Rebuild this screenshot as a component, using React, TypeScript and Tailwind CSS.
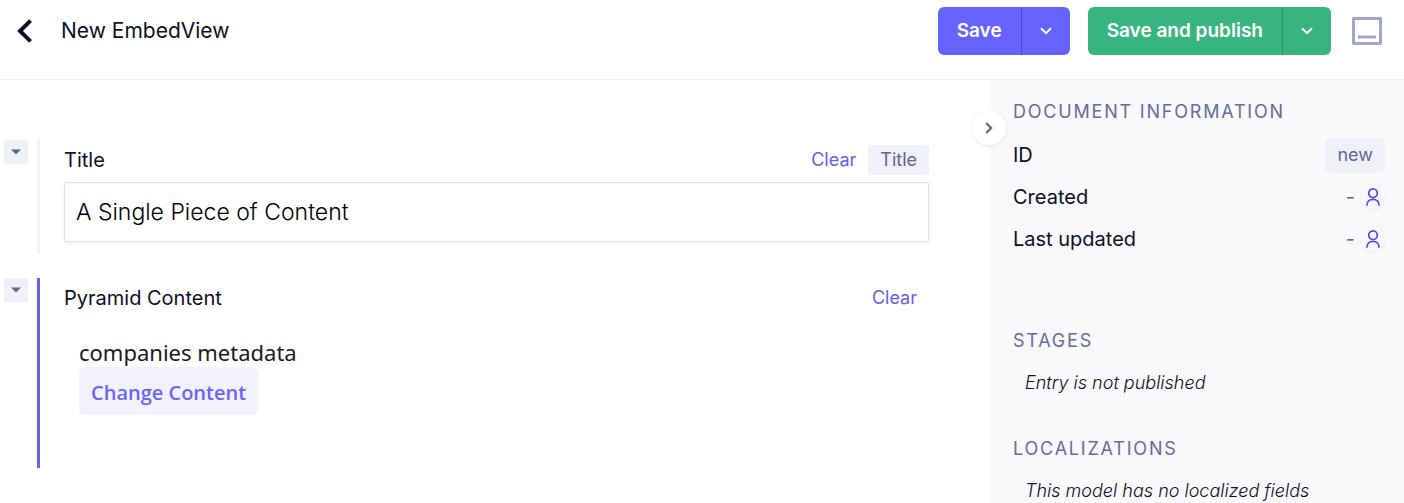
import { useState, type ReactNode } from "react";

function ChevronDown() {
  return (
    <svg width="12" height="8" viewBox="0 0 12 8" fill="none" stroke="currentColor" strokeWidth="2" aria-hidden="true">
      <path d="M1 1.2 6 6.2 11 1.2" />
    </svg>
  );
}

function SplitButton({ label, tone, divider }: { label: string; tone: string; divider: string }) {
  return (
    <div className={`flex h-12 overflow-hidden rounded-md text-white ${tone}`}>
      <button type="button" className="px-[19px] text-[19px] font-semibold">
        {label}
      </button>
      <button
        type="button"
        aria-label={`${label} options`}
        className={`flex w-[49px] items-center justify-center border-l ${divider}`}
      >
        <ChevronDown />
      </button>
    </div>
  );
}

function Header() {
  return (
    <header className="flex h-20 items-start justify-between border-b border-[#efeff3] pt-[7px] pr-[22px] pl-4">
      <div className="flex h-12 items-center gap-7">
        <button type="button" aria-label="Back" className="text-[#0d0f26]">
          <svg width="17" height="24" viewBox="0 0 17 24" fill="none" stroke="currentColor" strokeWidth="4" aria-hidden="true">
            <path d="M14.6 1.6 4 12l10.600 10.400" />
          </svg>
        </button>
        <h1 className="text-[21px] text-[#0d0f26]">New EmbedView</h1>
      </div>
      <div className="flex items-center gap-[18px]">
        <SplitButton label="Save" tone="bg-[#6663fd]" divider="border-[#4b46d8]" />
        <SplitButton label="Save and publish" tone="bg-[#38b47e]" divider="border-[#2a9566]" />
        <button type="button" aria-label="Toggle bottom panel" className="ml-[3px] text-[#a3a6cb]">
          <svg width="30" height="28" viewBox="0 0 30 28" fill="none" stroke="currentColor" strokeWidth="3" aria-hidden="true">
            <rect x="1.500" y="1.500" width="27" height="25" strokeLinejoin="round" />
            <path d="M6 20h18" />
          </svg>
        </button>
      </div>
    </header>
  );
}

function Field({ name, bar, children }: { name: string; bar: string; children: ReactNode }) {
  return (
    <section className="flex items-stretch">
      <button
        type="button"
        aria-label={`Collapse ${name}`}
        className="mr-[9px] flex size-6 items-center justify-center rounded-xs bg-[#f0f1f6] text-[#5f6496]"
      >
        <svg width="10" height="6" viewBox="0 0 10 6" fill="currentColor" aria-hidden="true">
          <path d="M0 .5h10L5 5.500z" />
        </svg>
      </button>
      <div className={`min-w-0 flex-1 border-l-3 pt-[5px] pl-6 ${bar}`}>{children}</div>
    </section>
  );
}

function ClearButton() {
  return (
    <button type="button" className="text-lg text-[#635ee6]">
      Clear
    </button>
  );
}

function PersonIcon() {
  return (
    <span className="flex size-6 items-center justify-center rounded-full bg-[#f8f6ff] shadow-sm shadow-[#ece8fb]">
      <svg width="14" height="18" viewBox="0 0 14 18" fill="none" stroke="#5b45d6" strokeWidth="1.700" strokeLinecap="round" aria-hidden="true">
        <circle cx="7" cy="5.200" r="4.300" />
        <path d="M1 17c0-3.300 2.500-5.600 6-5.600s6 2.300 6 5.600" />
      </svg>
    </span>
  );
}

function SectionTitle({ children }: { children: ReactNode }) {
  return <h2 className="text-lg tracking-widest text-[#666b9a] uppercase">{children}</h2>;
}

function Sidebar() {
  return (
    <aside className="relative w-[415px] shrink-0 bg-[#f9f9fc] pt-[18px] pr-[19px] pl-6">
      <button
        type="button"
        aria-label="Collapse sidebar"
        className="absolute top-[31px] left-[-17px] flex size-[34px] items-center justify-center rounded-full bg-white text-[#5f6496] shadow-[0_1px_4px_rgba(60,60,110,0.12)]"
      >
        <svg width="8" height="12" viewBox="0 0 8 12" fill="none" stroke="currentColor" strokeWidth="2.200" aria-hidden="true">
          <path d="m1.200 1 5 5-5 5" />
        </svg>
      </button>
      <SectionTitle>Document information</SectionTitle>
      <dl className="mt-[11px] text-xl text-[#0d0f26]">
        <div className="flex h-9 items-center justify-between">
          <dt>ID</dt>
          <dd className="flex h-9 items-center rounded-md bg-[#f0f1f6] px-3 text-lg text-[#5f6496]">new</dd>
        </div>
        <div className="mt-[3px] flex h-[42px] items-center justify-between">
          <dt>Created</dt>
          <dd className="flex items-center gap-[6px] text-[#5f6496]">
            - <PersonIcon />
          </dd>
        </div>
        <div className="flex h-[42px] items-center justify-between">
          <dt>Last updated</dt>
          <dd className="flex items-center gap-[6px] text-[#5f6496]">
            - <PersonIcon />
          </dd>
        </div>
      </dl>
      <div className="mt-[67px]">
        <SectionTitle>Stages</SectionTitle>
        <p className="mt-[14px] pl-3 text-lg font-light text-[#0d0f26] italic">Entry is not published</p>
      </div>
      <div className="mt-[38px]">
        <SectionTitle>Localizations</SectionTitle>
        <p className="mt-[14px] pl-3 text-lg font-light text-[#0d0f26] italic">This model has no localized fields</p>
      </div>
    </aside>
  );
}

export default function App() {
  const [title, setTitle] = useState("A Single Piece of Content");
  return (
    <div className="flex h-screen flex-col overflow-hidden bg-white font-['Inter',sans-serif]">
      <Header />
      <div className="flex min-h-0 flex-1">
        <main className="flex min-w-0 flex-1 flex-col gap-6 pt-[60px] pr-[60px] pl-1">
          <Field name="Title" bar="border-[#f0f1f4]">
            <div className="flex h-[30px] items-center gap-3">
              <label htmlFor="title" className="mr-auto text-xl text-[#0d0f26]">
                Title
              </label>
              <ClearButton />
              <span className="flex h-[30px] items-center rounded-sm bg-[#f0f1f6] px-3 text-lg text-[#5f6496]">
                Title
              </span>
            </div>
            <input
              id="title"
              value={title}
              onChange={(event) => setTitle(event.target.value)}
              className="mt-[7px] mb-3 block h-[60px] w-full rounded-xs border border-[#dcdcf2] px-[11px] text-[23px] font-light text-black shadow-[0_2px_4px_rgba(60,60,110,0.08)] outline-none"
            />
          </Field>
          <Field name="Pyramid Content" bar="border-[#6a63e0]">
            <div className="flex h-[30px] items-center justify-between pr-3">
              <h2 className="text-xl text-[#0d0f26]">Pyramid Content</h2>
              <ClearButton />
            </div>
            <div className="mt-6 mb-[53px] pl-[15px] font-['Noto_Sans',sans-serif]">
              <p className="text-[22px] leading-[30px] text-[#1a1a1a]">companies metadata</p>
              <button
                type="button"
                className="flex h-12 items-center rounded-md bg-[#f2f1fe] px-3 pt-[3px] font-['Open_Sans',sans-serif] text-xl font-semibold text-[#6c63ee]"
              >
                Change Content
              </button>
            </div>
          </Field>
        </main>
        <Sidebar />
      </div>
    </div>
  );
}
